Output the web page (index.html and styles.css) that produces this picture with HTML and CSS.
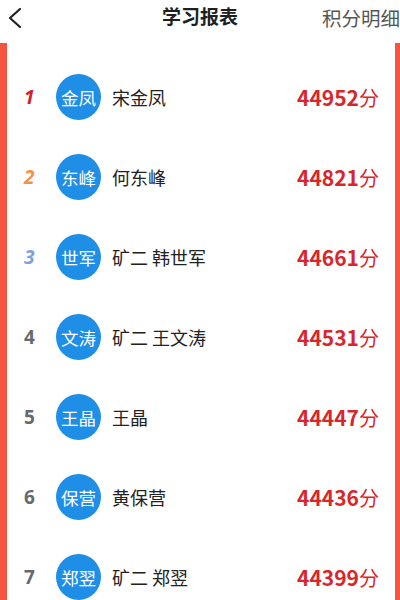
FILE: index.html
```html
<!DOCTYPE html>
<html lang="zh-CN">
<head>
<meta charset="utf-8">
<link rel="stylesheet" href="styles.css">
</head>
<body>
<div class="page">
  <header class="topbar">
    <svg class="back" width="16" height="22" viewBox="0 0 16 22"><path d="M13 2 L3 11 L13 20" fill="none" stroke="#222" stroke-width="2.2" stroke-linecap="round" stroke-linejoin="round"/></svg>
    <h1 class="title">学习报表</h1>
    <span class="detail">积分明细</span>
  </header>
  <main class="board">
    <ul class="list">
      <li class="row"><span class="rank top r1">1</span><span class="avatar">金凤</span><span class="name">宋金凤</span><span class="score"><b>44952</b>分</span></li>
      <li class="row"><span class="rank top r2">2</span><span class="avatar">东峰</span><span class="name">何东峰</span><span class="score"><b>44821</b>分</span></li>
      <li class="row"><span class="rank top r3">3</span><span class="avatar">世军</span><span class="name">矿二 韩世军</span><span class="score"><b>44661</b>分</span></li>
      <li class="row"><span class="rank">4</span><span class="avatar">文涛</span><span class="name">矿二 王文涛</span><span class="score"><b>44531</b>分</span></li>
      <li class="row"><span class="rank">5</span><span class="avatar">王晶</span><span class="name">王晶</span><span class="score"><b>44447</b>分</span></li>
      <li class="row"><span class="rank">6</span><span class="avatar">保营</span><span class="name">黄保营</span><span class="score"><b>44436</b>分</span></li>
      <li class="row"><span class="rank">7</span><span class="avatar">郑翌</span><span class="name">矿二 郑翌</span><span class="score"><b>44399</b>分</span></li>
    </ul>
  </main>
</div>
</body>
</html>
```

FILE: styles.css
```css
* { box-sizing: border-box; margin: 0; padding: 0; }
html, body { width: 400px; height: 600px; overflow: hidden; background: #fff; }
body { font-family: "Noto Sans CJK SC", "Noto Sans", sans-serif; color: #222; }
.page { display: flex; flex-direction: column; height: 600px; }
.topbar {
  height: 43px;
  display: flex;
  align-items: center;
  position: relative;
  padding: 0 0 8px 7px;
  flex-shrink: 0;
}
.back { display: block; }
.title {
  position: absolute;
  left: 0; right: 0; top: 2px;
  text-align: center;
  font-size: 19px;
  font-weight: 700;
  line-height: 28px;
  color: #1f1f1f;
  pointer-events: none;
}
.detail {
  margin-left: auto;
  font-size: 19.5px;
  line-height: 28px;
  color: #555;
  white-space: nowrap;
}
.board {
  flex: 1;
  border-left: 7px solid #f4553f;
  border-right: 5px solid #f4553f;
  background: #fff;
}
.list { list-style: none; padding-top: 14px; }
.row {
  height: 80px;
  display: flex;
  align-items: center;
  padding-left: 17px;
  padding-right: 16px;
}
.rank {
  width: 32px;
  font-size: 19px;
  font-weight: 700;
  color: #666a6e;
  font-family: "Noto Sans", "Noto Sans CJK SC", sans-serif;
}
.rank.top { font-style: italic; }
.r1 { color: #d0212b; }
.r2 { color: #f39340; }
.r3 { color: #7d9fdb; }
.avatar {
  width: 45px; height: 46px;
  border-radius: 50%;
  background: #1f8ee6;
  color: #fff;
  font-size: 17.5px;
  display: flex;
  align-items: center;
  justify-content: center;
}
.name {
  margin-left: 11px;
  font-size: 18px;
  color: #222;
}
.score {
  margin-left: auto;
  color: #d8262a;
  font-size: 20px;
}
.score b {
  font-weight: 700;
  font-size: 21px;
}
```
